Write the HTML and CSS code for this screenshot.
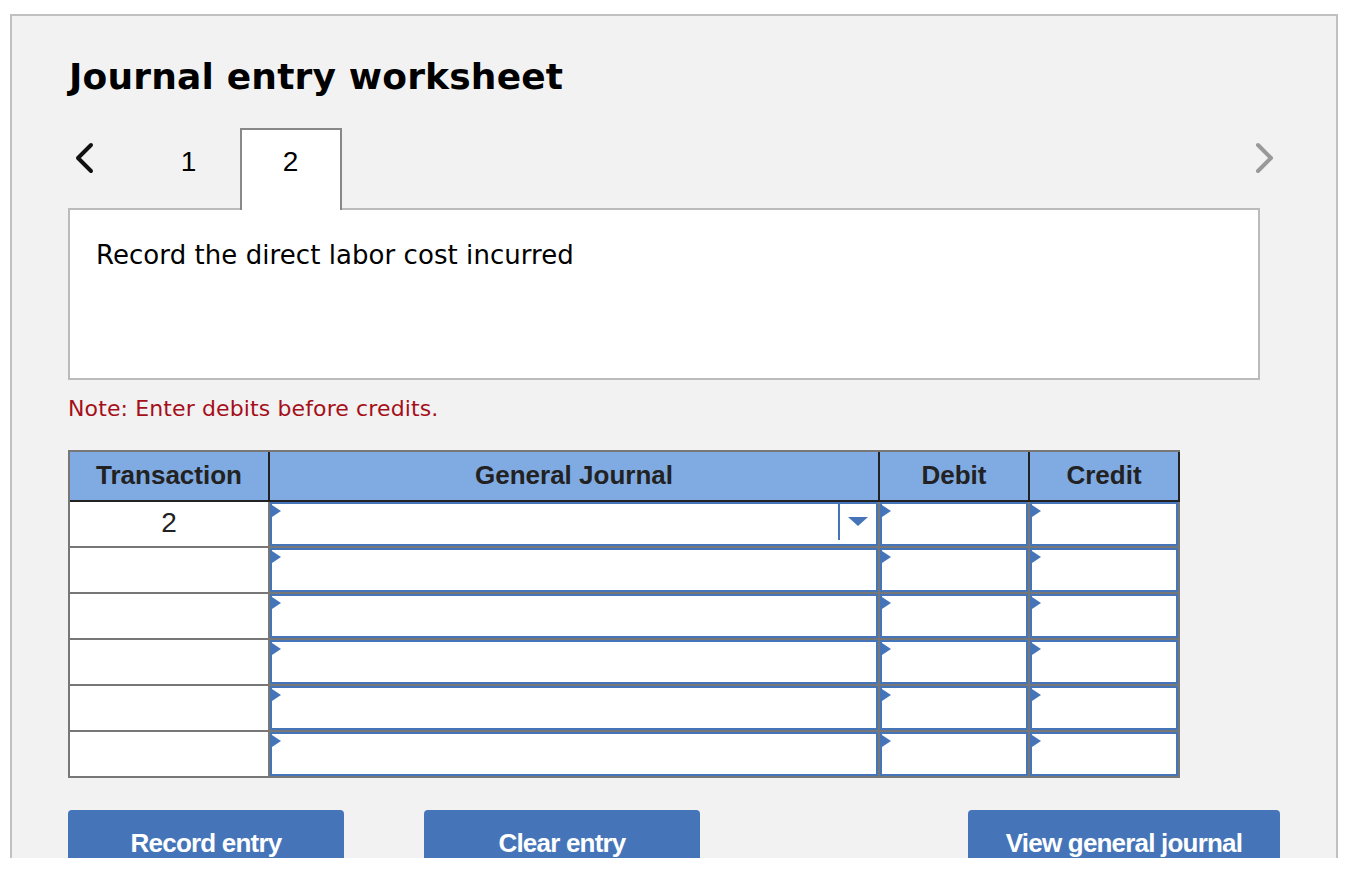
FILE: index.html
```html
<!DOCTYPE html>
<html lang="en">
<head>
  <meta charset="UTF-8">
  <title>Journal entry worksheet</title>
  <link rel="stylesheet" href="styles.css">
</head>
<body>
  <div class="panel">
    <h1>Journal entry worksheet</h1>

    <div class="tabs">
      <svg class="arrow arrow-prev" width="24" height="32" viewBox="0 0 24 32"><path d="M18 3 L5 16 L18 29" fill="none" stroke="#111" stroke-width="4" stroke-linecap="round" stroke-linejoin="round"/></svg>
      <div class="tab">1</div>
      <div class="tab tab-active">2</div>
      <svg class="arrow arrow-next" width="24" height="32" viewBox="0 0 24 32"><path d="M5 3 L18 16 L5 29" fill="none" stroke="#999" stroke-width="4" stroke-linecap="round" stroke-linejoin="round"/></svg>
    </div>

    <div class="prompt">Record the direct labor cost incurred</div>

    <p class="note">Note: Enter debits before credits.</p>

    <div class="journal">
      <div class="head">Transaction</div>
      <div class="head">General Journal</div>
      <div class="head">Debit</div>
      <div class="head">Credit</div>

      <div class="num">2</div>
      <div class="cell"><div class="input has-select"><span class="select-line"></span><span class="caret"></span></div></div>
      <div class="cell"><div class="input"></div></div>
      <div class="cell"><div class="input"></div></div>

      <div class="num"></div>
      <div class="cell"><div class="input"></div></div>
      <div class="cell"><div class="input"></div></div>
      <div class="cell"><div class="input"></div></div>

      <div class="num"></div>
      <div class="cell"><div class="input"></div></div>
      <div class="cell"><div class="input"></div></div>
      <div class="cell"><div class="input"></div></div>

      <div class="num"></div>
      <div class="cell"><div class="input"></div></div>
      <div class="cell"><div class="input"></div></div>
      <div class="cell"><div class="input"></div></div>

      <div class="num"></div>
      <div class="cell"><div class="input"></div></div>
      <div class="cell"><div class="input"></div></div>
      <div class="cell"><div class="input"></div></div>

      <div class="num"></div>
      <div class="cell"><div class="input"></div></div>
      <div class="cell"><div class="input"></div></div>
      <div class="cell"><div class="input"></div></div>
    </div>

    <div class="buttons">
      <button class="button">Record entry</button>
      <button class="button">Clear entry</button>
      <button class="button button-wide">View general journal</button>
    </div>
  </div>
</body>
</html>
```

FILE: styles.css
```css
html, body {
  margin: 0;
  background-color: white;
}
body {
  height: 894px;
  padding: 14px 14px 0 10px;
  box-sizing: border-box;
  overflow: hidden;
}
.panel {
  height: 844px;
  box-sizing: border-box;
  padding: 0 56px;
  background-color: #f2f2f2;
  border: 2px solid #c0c0c0;
  border-bottom: none;
  overflow: hidden;
  font-family: "DejaVu Sans", sans-serif;
  color: black;
}
h1 {
  margin: 36px 0 0;
  height: 76px;
  padding-left: 1px;
  font-size: 36px;
  line-height: 50px;
  font-weight: bold;
  letter-spacing: 0.18px;
}
.tabs {
  display: flex;
  height: 82px;
  margin-bottom: -2px;
  position: relative;
  font-family: "Liberation Sans", sans-serif;
}
.arrow {
  margin-top: 14px;
}
.arrow-prev {
  margin-left: 5px;
  margin-right: 41px;
}
.arrow-next {
  margin-left: auto;
  margin-right: 3px;
}
.tab {
  width: 102px;
  box-sizing: border-box;
  padding-top: 16px;
  padding-right: 1px;
  font-size: 28px;
  line-height: 32px;
  text-align: center;
  border: 2px solid transparent;
  border-bottom: none;
}
.tab-active {
  background-color: white;
  border-color: #888;
}
.prompt {
  width: 1192px;
  height: 172px;
  box-sizing: border-box;
  padding: 28px 26px;
  background-color: white;
  border: 2px solid #bbb;
  font-size: 26px;
  line-height: 34px;
  letter-spacing: 0.06px;
}
.note {
  margin: 14px 0 0;
  height: 56px;
  font-size: 22px;
  line-height: 30px;
  letter-spacing: 0.12px;
  color: #a50f1a;
}
.journal {
  display: grid;
  grid-template-columns: 200px 610px 150px 150px;
  grid-template-rows: 50px repeat(6, 46px);
  width: 1112px;
  box-sizing: border-box;
  border-top: 2px solid #777;
  border-left: 2px solid #777;
  font-family: "Liberation Sans", sans-serif;
  color: #222;
}
.head {
  box-sizing: border-box;
  background-color: #80abe2;
  border-right: 2px solid #222;
  border-bottom: 2px solid #222;
  font-size: 26px;
  font-weight: bold;
  line-height: 46px;
  text-align: center;
}
.num, .cell {
  box-sizing: border-box;
  background-color: white;
  border-right: 2px solid #777;
  border-bottom: 2px solid #777;
}
.num {
  font-size: 28px;
  line-height: 42px;
  text-align: center;
}
.input {
  position: relative;
  height: 100%;
  box-sizing: border-box;
  border: 2px solid #4575b8;
}
.input::before {
  content: "";
  position: absolute;
  left: 0;
  top: 1px;
  border-top: 6px solid transparent;
  border-bottom: 6px solid transparent;
  border-left: 9px solid #4575b8;
}
.select-line {
  position: absolute;
  right: 36px;
  top: 0;
  width: 2px;
  height: 36px;
  background-color: #4575b8;
}
.caret {
  position: absolute;
  right: 8px;
  top: 13px;
  border-left: 10px solid transparent;
  border-right: 10px solid transparent;
  border-top: 9px solid #4575b8;
}
.buttons {
  display: flex;
  gap: 80px;
  margin-top: 32px;
}
.button {
  width: 276px;
  height: 70px;
  padding: 0 0 4px;
  background-color: #4575b8;
  border: none;
  border-radius: 4px;
  color: white;
  font-family: "Liberation Sans", sans-serif;
  font-size: 26px;
  font-weight: bold;
  letter-spacing: -0.8px;
}
.button-wide {
  width: 312px;
  margin-left: auto;
}
```
